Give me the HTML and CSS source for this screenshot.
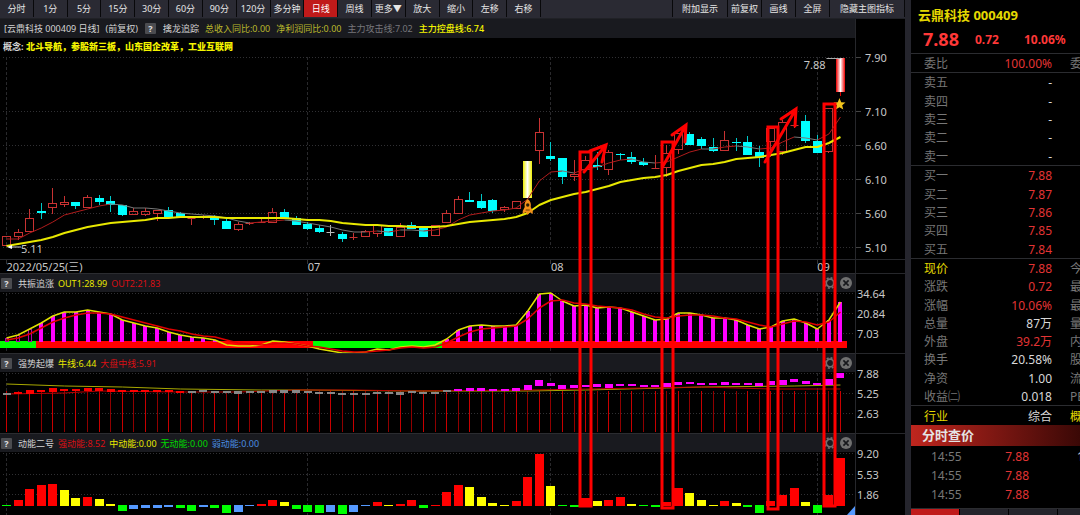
FILE: index.html
```html
<!DOCTYPE html>
<html lang="zh-CN">
<head>
<meta charset="utf-8">
<title>云鼎科技 000409</title>
<link rel="stylesheet" href="styles.css">
</head>
<body>
<svg class="defs" aria-hidden="true">
  <symbol id="gear" viewBox="0 0 12 12">
    <circle cx="6" cy="6" r="3.800" fill="none" stroke="#707070" stroke-width="1.8"/>
    <circle cx="6" cy="6" r="5.200" fill="none" stroke="#707070" stroke-width="1.6" stroke-dasharray="2 2.08"/>
  </symbol>
  <symbol id="close" viewBox="0 0 12 12">
    <circle cx="6" cy="6" r="6" fill="#707070"/>
    <path d="M3.4 3.4l5.2 5.2M8.6 3.4l-5.2 5.2" stroke="#17181c" stroke-width="1.6"/>
  </symbol>
</svg>
<div class="app">
  <main class="workspace">
    <nav class="toolbar">
      <div class="periods">
        <button>分时</button><button>1分</button><button>5分</button><button>15分</button><button>30分</button><button>60分</button><button>90分</button><button>120分</button><button>多分钟</button><button class="active">日线</button><button>周线</button><button>更多▼</button><button>放大</button><button>缩小</button><button>左移</button><button>右移</button>
      </div>
      <div class="tools">
        <button class="wide">附加显示</button><button>前复权</button><button>画线</button><button>全屏</button><button class="widest">隐藏主图指标</button>
      </div>
    </nav>
    <div class="board">
      <div class="charts">
        <header class="bar bar-main">
          <span>[云鼎科技 000409 日线]</span><span>(前复权)</span><button class="help">?</button>
          <span>擒龙追踪</span><span class="olive">总收入同比:0.00</span><span class="olive">净利润同比:0.00</span><span class="grey">主力攻击线:7.02</span><span class="yellow strong">主力控盘线:6.74</span>
        </header>
        <section class="price">
          <svg id="price" class="plot plot-price"></svg>
          <p class="concept">概念: <b>北斗导航，参股新三板，山东国企改革，工业互联网</b></p>
        </section>
        <svg id="dates" class="plot plot-dates"></svg>
        <header class="bar">
          <button class="help">?</button><span class="name">共振追涨</span><span class="yellow">OUT1:28.99</span><span class="red">OUT2:21.83</span>
          <div class="actions"><button aria-label="设置"><svg><use href="#gear"/></svg></button><button aria-label="关闭"><svg><use href="#close"/></svg></button></div>
        </header>
        <svg id="trend" class="plot"></svg>
        <header class="bar">
          <button class="help">?</button><span class="name">强势起爆</span><span class="yellow">牛线:6.44</span><span class="red">大盘中线:5.91</span>
          <div class="actions"><button aria-label="设置"><svg><use href="#gear"/></svg></button><button aria-label="关闭"><svg><use href="#close"/></svg></button></div>
        </header>
        <svg id="burst" class="plot"></svg>
        <header class="bar">
          <button class="help">?</button><span class="name">动能二号</span><span class="red">强动能:8.52</span><span class="yellow">中动能:0.00</span><span class="green">无动能:0.00</span><span class="blue">弱动能:0.00</span>
          <div class="actions"><button aria-label="设置"><svg><use href="#gear"/></svg></button><button aria-label="关闭"><svg><use href="#close"/></svg></button></div>
        </header>
        <svg id="energy" class="plot plot-energy"></svg>
        <svg id="marks" class="marks"></svg>
      </div>
      <svg id="axis" class="axis"></svg>
    </div>
  </main>
  <aside class="quote">
    <h1>云鼎科技 000409</h1>
    <div class="last"><strong>7.88</strong><b>0.72</b><b class="pct">10.06%</b></div>
    <table class="ratio"><tr><th>委比</th><td class="up">100.00%</td><td class="next">委</td></tr></table>
    <table class="book">
      <tr><th>卖五</th><td>-</td><td></td></tr><tr><th>卖四</th><td>-</td><td></td></tr><tr><th>卖三</th><td>-</td><td></td></tr><tr><th>卖二</th><td>-</td><td></td></tr><tr><th>卖一</th><td>-</td><td></td></tr>
    </table>
    <table class="book">
      <tr><th>买一</th><td class="up">7.88</td><td></td></tr><tr><th>买二</th><td class="up">7.87</td><td></td></tr><tr><th>买三</th><td class="up">7.86</td><td></td></tr><tr><th>买四</th><td class="up">7.85</td><td></td></tr><tr><th>买五</th><td class="up">7.84</td><td></td></tr>
    </table>
    <table class="stats">
      <tr><th class="hl">现价</th><td class="up">7.88</td><td class="next">今</td></tr>
      <tr><th>涨跌</th><td class="up">0.72</td><td class="next">最</td></tr>
      <tr><th>涨幅</th><td class="up">10.06%</td><td class="next">最</td></tr>
      <tr><th>总量</th><td>87万</td><td class="next">量</td></tr>
      <tr><th>外盘</th><td class="up">39.2万</td><td class="next">内</td></tr>
      <tr><th>换手</th><td>20.58%</td><td class="next">股</td></tr>
      <tr><th>净资</th><td>1.00</td><td class="next">流</td></tr>
      <tr><th>收益㈡</th><td>0.018</td><td class="next">PE</td></tr>
    </table>
    <table class="sector"><tr><th class="hl">行业</th><td>综合</td><td class="next hl">概</td></tr></table>
    <h2>分时查价</h2>
    <table class="ticks">
      <tr><th>14:55</th><td class="up">7.88</td><td class="vol">1</td></tr>
      <tr><th>14:55</th><td class="up">7.88</td><td></td></tr>
      <tr><th>14:55</th><td class="up">7.88</td><td></td></tr>
    </table>
    <div class="tabs"><i class="on"></i><i></i><i></i><i></i></div>
  </aside>
</div>
<script src="chart.js"></script>
</body>
</html>
```

FILE: styles.css
```css
* { box-sizing: border-box; }
body {
  margin: 0;
  background: #000;
  color: #d4d4d4;
  font-family: "Noto Sans", "Noto Sans CJK SC", sans-serif;
  font-size: 9px;
  overflow: hidden;
}
button {
  border: 0;
  padding: 0;
  background: none;
  color: inherit;
  font: inherit;
  white-space: nowrap;
}
.defs { position: absolute; width: 0; height: 0; }
.app { display: flex; min-height: 100vh; }
.workspace { flex: 1; min-width: 0; }

.toolbar {
  display: flex;
  justify-content: space-between;
  height: 19px;
  padding-bottom: 1px;
  background: #2a2a33;
  border-bottom: 1px solid #202126;
  color: #e6e6e6;
}
.periods { display: flex; flex: 0 0 541px; }
.periods button { flex: 1 1 0; }
.tools { display: flex; border-left: 1px solid #08080a; }
.toolbar button { border-right: 1px solid #08080a; line-height: 17px; }
.toolbar .active { background: #c01a1a; color: #fff; }
.tools button { width: 34px; }
.tools .wide { width: 55px; }
.tools .widest { width: 75px; }

.board { display: flex; }
.charts { position: relative; flex: 1; min-width: 0; }
.bar {
  display: flex;
  align-items: center;
  gap: 4px;
  height: 19px;
  padding: 0 3px 0 1px;
  background: #191a1f;
  border-top: 1px solid #2b2c30;
  white-space: nowrap;
}
.bar-main { gap: 6px; padding-left: 4px; border-top: 0; }
.bar-main .help { margin: 0 1px; }
.help {
  width: 11px;
  height: 11px;
  border-radius: 1px;
  background: #4b4c50;
  color: #e0e0e0;
  font-weight: bold;
  line-height: 11px;
}
.name { margin-left: 2px; }
.actions { display: flex; gap: 4px; margin-left: auto; }
.actions button, .actions svg { display: block; width: 12px; height: 12px; }
.olive { color: #b9b92c; }
.grey { color: #77777b; }
.yellow { color: #e8e800; }
.red { color: #d80f14; }
.green { color: #00d800; }
.blue { color: #4a8de0; }
.strong { font-weight: 500; color: #f4f400; }

.price { position: relative; }
.concept {
  position: absolute;
  top: 0;
  left: 3px;
  margin: 0;
  line-height: 18px;
  font-weight: bold;
}
.concept b { color: #f4f400; }
.plot { display: block; width: 100%; height: 61px; }
.plot-price { height: 221px; }
.plot-dates { height: 14px; border-top: 1px solid #26272b; }
.plot-energy { height: 63px; }
.marks { position: absolute; top: 0; left: 0; width: 100%; height: 100%; pointer-events: none; }
.axis { flex: 0 0 50px; width: 50px; height: 496px; border-left: 1px solid #26272b; }
svg text { font-family: "Noto Sans", "Noto Sans CJK SC", sans-serif; font-size: 11px; fill: #c8c8c8; }

.quote {
  flex: 0 0 175px;
  overflow: hidden;
  border-left: 6px solid #25252d;
  font-size: 12px;
}
.quote h1 { margin: 0; padding: 6px 0 0 7px; font-size: 13px; line-height: 19px; color: #e4d800; white-space: nowrap; }
.last {
  display: flex;
  align-items: center;
  height: 28px;
  padding-left: 12px;
  color: #ff3838;
}
.last strong { width: 52px; font-size: 18px; line-height: 24px; }
.last b { width: 49px; }
.quote table {
  width: 180px;
  table-layout: fixed;
  border-collapse: collapse;
  border-top: 1px solid #2b2c30;
  line-height: 16px;
}
.quote th { width: 62px; padding: 2px 0 0 13px; color: #777; font-weight: normal; text-align: left; white-space: nowrap; }
.quote td { width: 79px; padding: 2px 0 0; color: #d8d8d8; text-align: right; }
.quote td:last-child { width: auto; padding-left: 18px; text-align: left; }
.quote td.up { color: #e33434; }
.quote td.next { color: #777; }
.quote .hl, .quote td.hl { color: #e4d800; }
.ratio { height: 18px; }
.book { height: 93px; }
.stats { height: 147px; }
.sector { height: 20px; }
.quote h2 {
  margin: 0;
  padding-left: 11px;
  background: linear-gradient(90deg, #bf261e, #3a0806);
  color: #e4e4e4;
  font-size: 13px;
  line-height: 21px;
}
.quote .ticks { margin-bottom: 5px; border-top: 0; line-height: 17px; }
.quote .ticks th { padding-left: 20px; }
.ticks td { width: 56px; }
.quote .ticks td:last-child { padding-left: 48px; }
.tabs { display: flex; gap: 1px; height: 7px; border-top: 1px solid #2b2c30; }
.tabs i { flex: 0 0 48px; background: #24242b; }
.tabs .on { background: #c01a1a; }
```

FILE: chart.js
```js
// Each candle: [kind, high, body top, body bottom, low]; r rising, c falling, d flat.
const candles = [
  'r 236 236 246 246','r 229 232 237 240','r 209 218 232 232','c 203 211 213 219','r 188 203 208 214','r 196 202 205 207',
  'c 202 202 206 209','r 195 197 208 208','c 195 198 202 205','c 196 201 205 212','c 205 205 215 216','r 208 211 215 215',
  'r 208 211 215 216','r 210 210 214 221','c 207 210 217 217','c 212 213 217 217','r 218 218 219 225','r 215 217 217 219',
  'c 215 218 220 225','c 218 221 229 229','r 222 224 230 231','r 222 223 224 225','r 217 222 222 223','r 208 212 223 223',
  'c 209 212 219 219','c 216 218 225 225','c 222 224 229 230','c 225 228 232 233','d 225 232 232 236','c 232 234 239 242',
  'r 233 237 238 240','r 230 231 237 237','r 225 225 234 237','c 228 228 236 236','r 223 227 237 237','c 222 225 229 229',
  'c 226 228 237 237','r 225 225 236 236','r 210 213 223 223','r 196 199 214 214','c 192 200 202 202','c 194 201 208 209',
  'c 199 200 211 213','r 206 207 210 212','r 201 201 209 209','y 161 161 198 198','r 118 132 151 164','c 142 156 159 161',
  'c 158 158 177 184','r 160 174 177 181','r 156 160 170 170','c 152 165 167 170','r 150 152 170 175','c 153 154 155 160',
  'c 152 157 162 164','c 158 162 165 166','r 155 168 168 168','r 145 153 168 177','r 133 133 150 154','c 132 134 145 145',
  'c 137 139 146 149','c 138 147 151 152','r 131 140 151 151','c 138 142 143 151','c 136 142 155 155','c 146 152 158 167',
  'r 128 128 142 157','r 120 122 152 155','r 117 125 126 128','c 115 121 141 143','c 135 141 153 153','r 108 108 152 153','w 58 58 92 96'
].map(s => s.split(' ').map((v, i) => i ? +v : v));
const attack = [239,239,233,228,222,215,212,209,206,204,205,208,208,209,211,213,214,215,216,218,221,223,222,221,220,221,223,225,227,230,232,232,231,232,230,230,231,230,227,220,215,213,211,210,208,199,181,172,171,173,169,167,163,160,159,162,163,162,157,152,149,149,147,146,147,149,148,142,137,138,140,134,117];
const control = [246,244,242,240,237,233,230,227,225,223,222,221,220,218,218,217,217,217,217,218,218,218,218,218,218,219,220,220,221,223,224,225,225,226,226,227,227,227,226,224,222,221,220,219,217,213,205,200,197,194,192,189,186,182,180,178,177,175,171,168,165,164,162,159,158,157,155,153,150,147,147,143,137];
const out1 = [338,335,329,323,316,312,312,310,312,314,320,323,326,328,332,335,337,338,340,345,346,346,345,341,342,344,346,349,351,353,353,352,349,350,347,346,347,345,339,330,326,325,326,326,325,311,294,293,301,306,305,308,307,308,312,316,320,319,313,313,315,318,318,320,325,329,327,321,319,323,329,320,302];
const out2 = [340,338,334,328,322,318,315,313,313,314,317,320,323,326,329,331,334,336,337,340,343,344,345,344,343,344,346,347,349,351,352,352,351,350,348,347,348,347,343,337,332,329,328,327,326,319,308,301,300,303,304,306,307,308,310,314,317,318,316,315,315,316,318,319,322,325,327,324,321,322,325,322,312];
const bull = {0:384,5:386,10:387,15:389,22:390,26:390,35:391,45:391,50:390,57:388,60:387,68:386,72:385};
const market = {0:394,5:393,8:391,15:392,20:392,25:390,30:390,35:391,45:390,50:389,60:387,66:389,72:389};
// Top and height of the small bodies in the burst panel.
const blocks = '393 2,392 2,390 4,390 2,388 4,389 2,389 2,388 3,388 3,389 3,390 2,390 2,390 2,390 2,390 2,391 2,391 2,390 2,391 2,391 2,391 3,391 2,391 2,390 3,390 3,390 3,391 2,392 2,392 2,393 2,393 2,393 2,392 2,392 2,392 3,391 2,392 2,392 2,390 2,389 2,388 3,388 3,389 2,389 2,388 3,385 5,380 6,383 3,385 4,385 3,385 2,384 3,384 4,384 2,384 2,385 2,385 2,383 4,382 3,382 2,383 2,383 2,382 3,383 2,383 2,383 3,381 4,380 5,379 3,381 3,383 2,379 6,373 5'
  .split(',').map(s => s.split(' ').map(Number));
const energy = 'g-1 r6 r17 r21 r22 y16 y8 r9 y7 y2 g-6 b-4 b-3 b-3 b-2 g-3 g-6 b-2 g-3 g-8 b-7 b-1 r2 r6 y4 g-4 g-7 g-8 b-7 g-9 b-7 b-1 r4 y1 r2 r6 g-3 r1 r14 r21 y19 y9 y3 y1 r5 r29 r52 y20 g-1 g-2 r8 y5 r6 r9 y2 g-1 g-2 r4 r18 y13 y6 y1 r5 y3 g-2 g-8 r5 r11 r18 y4 g-8 r11 r48'.split(' ');
const colours = { r: '#ff0000', y: '#ffff00', g: '#00ff00', b: '#5599ff' };

const base = 855;
let scale = 1;
const X = i => (6.5 + 11.583 * i) * scale;
const rect = (x, y, w, h, fill, extra = '') => `<rect x="${x}" y="${y}" width="${w}" height="${h}" fill="${fill}" ${extra}/>`;
const line = (x1, y1, x2, y2, stroke, extra = '') => `<line x1="${x1}" y1="${y1}" x2="${x2}" y2="${y2}" stroke="${stroke}" ${extra}/>`;
const poly = (pts, stroke, w) => `<polyline points="${pts.map(p => p.join()).join(' ')}" fill="none" stroke="${stroke}" stroke-width="${w}" stroke-linejoin="round"/>`;
const series = (ys, stroke, w) => poly(ys.map((y, i) => [X(i), y]), stroke, w);
const sparse = (o, stroke) => poly(Object.entries(o).map(([i, y]) => [X(+i), y]), stroke, 1);

function grid(rows, top, bottom, w) {
  return rows.map(y => line(3, y + .5, w, y + .5, '#303033', 'stroke-dasharray="1 2"')).join('') +
    [0, 26, 47, 70].map(i => line(Math.floor(X(i)) + .5, top, Math.floor(X(i)) + .5, bottom, '#29292c', 'stroke-dasharray="3 2"')).join('');
}
function put(id, top, body) {
  const el = document.getElementById(id);
  el.setAttribute('viewBox', `0 ${top} ${el.clientWidth || base} ${el.clientHeight}`);
  el.innerHTML = body;
}
function candle([k, hi, t, b, lo], i) {
  const x = Math.round(X(i) - .5) + .5;
  if (k === 'y') return `<defs><linearGradient id="gy"><stop stop-color="#ee0"/><stop offset=".5" stop-color="#fff"/><stop offset="1" stop-color="#ee0"/></linearGradient></defs>` + rect(x - 4.5, t, 9, b - t, 'url(#gy)');
  if (k === 'w') return `<defs><linearGradient id="gw"><stop stop-color="#f00000"/><stop offset=".5" stop-color="#fff"/><stop offset="1" stop-color="#f00000"/></linearGradient></defs>` + line(x, b, x, lo, '#d00') + rect(x - 4.5, t, 9, b - t, 'url(#gw)');
  if (k === 'c') return line(x, hi, x, lo, '#00c8c8') + rect(x - 4.5, t, 9, b - t, '#00ffff');
  const s = k === 'd' ? '#bbb' : '#c83232';
  if (b - t < 2) return line(x, hi, x, lo, s) + line(x - 4, t + .5, x + 4, t + .5, s);
  return line(x, hi, x, t, s) + line(x, b, x, lo, s) + rect(x - 4, t + .5, 8, b - t - 1, 'none', `stroke="${s}"`);
}
function drawPrice(w) {
  let s = grid([57, 111, 145, 179, 213, 247], 57, 247, w) + candles.map(candle).join('');
  for (let i = 1; i < attack.length; i++)
    s += line(X(i - 1), attack[i - 1], X(i), attack[i], attack[i] < attack[i - 1] || i < 2 ? '#b01c1c' : '#777');
  s += series(control, '#e8e800', 2);
  s += `<g transform="translate(${X(45)} 199)"><path d="M0 0C3 2 3.5 5 3 8L5 12L5 15L2 13L0 16L-2 13L-5 15L-5 12L-3 8C-3.500 5-3 2 0 0Z" fill="#f39019"/><circle cy="6" r="1.700" fill="#2b1b05"/><path d="M-2 11h4" stroke="#6b3a05"/></g>`;
  s += `<path transform="translate(${X(72) - 1} 104)" d="M0-6L1.700-1.800L6-1.500L2.700 1.300L3.800 5.500L0 3.200L-3.800 5.500L-2.700 1.300L-6-1.500L-1.700-1.800Z" fill="#f3c51c"/>`;
  s += line(X(72) - 14, 58.5, X(72), 58.5, '#aaa') + `<text x="${X(72) - 15}" y="69" text-anchor="end">7.88</text>`;
  s += line(9, 247, 21, 247, '#ccc') + `<path d="M7 247l5-2v4z" fill="#fff"/><text x="21" y="253">5.11</text>`;
  put('price', 38, s);
}
function draw() {
  const w = document.getElementById('price').clientWidth || base;
  scale = w / base;
  drawPrice(w);
  put('dates', 260, [[0, '2022/05/25(三)'], [26, '07'], [47, '08'], [70, '09']].map(([i, t]) => line(Math.floor(X(i)) + .5, 260, Math.floor(X(i)) + .5, 264, '#333') + `<text x="${X(i)}" y="271">${t}</text>`).join(''));

  let s = grid([293, 313, 333], 293, 353, w);
  s += [[0, 36, '#0f0'], [36, 313, '#f00'], [313, 442, '#0f0'], [442, 847, '#f00']].map(([a, b, c]) => rect(a * scale, 341, (b - a) * scale, 7, c)).join('');
  out1.forEach((y, i) => {
    if (y > 340) return;
    const x = Math.round(X(i) - 2);
    s += i < 3 ? rect(x + .5, y + .5, 3, 341 - y, 'none', 'stroke="#b000b0"') : rect(x, y, 4, 342 - y, '#ff00ff');
  });
  put('trend', 292, s + series(out1, '#e0e000', 1.5) + series(out2, '#e00000', 1.5));

  s = grid([373, 393, 413], 373, 433, w);
  blocks.forEach((b, i) => { s += line(Math.floor(X(i)) + .5, 391, Math.floor(X(i)) + .5, 432, i % 2 ? '#900000' : '#c80000'); });
  s += sparse(bull, '#a8a800') + sparse(market, '#b80000');
  blocks.forEach(([y, h], i) => {
    const grey = i === 0 || (i > 15 && i < 39);
    s += rect(Math.round(X(i) - 4), y, 8, h, grey ? '#888' : i < 16 ? '#f00' : '#f0f');
  });
  put('burst', 372, s);

  s = grid([453, 474, 494], 453, 515, w);
  energy.forEach((e, i) => {
    const v = +e.slice(1);
    s += rect(Math.round(X(i) - 4.5), v > 0 ? 506 - v : 505, 9, Math.abs(v), colours[e[0]]);
  });
  put('energy', 452, s + `<path d="M${w} 506v9h-8z" fill="#5599ff"/>`);

  const boxes = [[580, 152, 591, 506], [662, 142, 673, 508], [768, 127, 778, 509], [824, 104, 835, 506]];
  const arrows = [[584, 172, 606, 145, 590, 151, 602, 162], [663, 166, 686, 125, 672, 135, 685, 142], [765, 162, 796, 109, 781, 119, 795, 126]];
  put('marks', 19, '<g fill="none" stroke="#f00" stroke-width="3">' +
    boxes.map(([a, t, b, d]) => `<rect x="${a * scale}" y="${t}" width="${(b - a) * scale}" height="${d - t}"/>`).join('') +
    arrows.map(([a, b, c, d, e, f, g, h]) => `<path d="M${a * scale} ${b}L${c * scale} ${d}M${e * scale} ${f}L${c * scale} ${d}L${g * scale} ${h}" stroke-linecap="round"/>`).join('') + '</g>');

  s = [259, 273, 353, 433].map(y => line(0, y + .5, 49, y + .5, '#26272b')).join('');
  s += [[57, '7.90'], [111, '7.10'], [145, '6.60'], [179, '6.10'], [213, '5.60'], [247, '5.10']].map(([y, t]) => line(0, y + .5, 5, y + .5, '#444') + `<text x="9" y="${y + 5}">${t}</text>`).join('');
  s += [[293, '34.64'], [313, '20.84'], [333, '7.03'], [373, '7.88'], [393, '5.25'], [413, '2.63'], [453, '9.20'], [474, '5.53'], [494, '1.86']].map(([y, t]) => `<text x="1" y="${y + 5}">${t}</text>`).join('');
  put('axis', 19, s);
}
draw();
window.addEventListener('resize', draw);
```
